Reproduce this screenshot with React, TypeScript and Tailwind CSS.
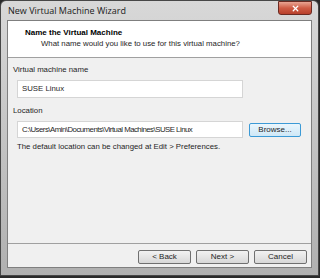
import { X } from "lucide-react";

const FONT = "font-['Liberation_Sans','Noto_Sans',sans-serif]";

function Button({ label, focused }: { label: string; focused?: boolean }) {
  return (
    <div
      className={`h-[14px] flex items-center justify-center rounded-[2px] border text-[8px] text-[#1e1e1e] bg-gradient-to-b ${
        focused
          ? "border-[#3c9ad6] from-[#eaf6fd] to-[#cfe8f7]"
          : "border-[#707070] from-[#f2f2f2] to-[#d8d8d8]"
      }`}
    >
      {label}
    </div>
  );
}

export default function App() {
  return (
    <div className={`w-[320px] h-[278px] bg-[#2a2a2a] ${FONT}`}>
      <div className="w-[319px] h-[276px] flex flex-col rounded-t-[6px] border border-[#474747] bg-gradient-to-b from-[#d8d8d8] via-[#c4c4c4] to-[#b0b0b0] px-[6px] pb-[7px]">
        <div className="h-[19px] flex items-center justify-between">
          <span className="text-[9px] text-[#1a1a1a] pl-[1px] pt-[1px] font-['Open_Sans',sans-serif]">
            New Virtual Machine Wizard
          </span>
          <div className="w-[34px] h-[14px] -mt-[5px] flex items-center justify-center rounded-b-[3px] border border-[#6b2a22] bg-gradient-to-b from-[#e8a493] via-[#cf5c45] to-[#b8402c]">
            <X size={9} strokeWidth={3.5} className="text-white" />
          </div>
        </div>
        <div className="flex-1 flex flex-col border border-[#7f7f7f] bg-[#f0f0f0]">
          <div className="h-[37px] bg-white border-b border-[#a0a0a0] pl-[17px] pt-[6px]">
            <div className="text-[8px] font-bold text-black leading-[11px]">Name the Virtual Machine</div>
            <div className="text-[7.8px] text-[#1e1e1e] leading-[11px] pl-[16px]">
              What name would you like to use for this virtual machine?
            </div>
          </div>
          <div className="flex-1 flex flex-col px-[5px] pt-[7px] text-[7.8px] text-[#1e1e1e]">
            <div className="leading-[10px]">Virtual machine name</div>
            <div className="ml-[4px] mt-[5px] w-[226px] h-[18px] bg-white border border-[#d5d5d5] flex items-center pl-[4px]">
              SUSE Linux
            </div>
            <div className="leading-[10px] mt-[8px]">Location</div>
            <div className="ml-[4px] mt-[5px] flex items-center gap-[6px]">
              <div className="w-[226px] h-[17px] bg-white border border-[#d5d5d5] flex items-center pl-[4px] whitespace-nowrap tracking-[-0.5px]">
                C:\Users\Amin\Documents\Virtual Machines\SUSE Linux
              </div>
              <div className="w-[52px]">
                <Button label="Browse..." focused />
              </div>
            </div>
            <div className="ml-[4px] mt-[4px] leading-[10px]">
              The default location can be changed at Edit &gt; Preferences.
            </div>
          </div>
          <div className="h-[24px] border-t border-[#a0a0a0] flex items-start justify-end gap-[5px] pr-[4px] pt-[6px]">
            <div className="w-[53px]">
              <Button label="< Back" />
            </div>
            <div className="w-[53px]">
              <Button label="Next >" />
            </div>
            <div className="w-[53px]">
              <Button label="Cancel" />
            </div>
          </div>
        </div>
      </div>
    </div>
  );
}
